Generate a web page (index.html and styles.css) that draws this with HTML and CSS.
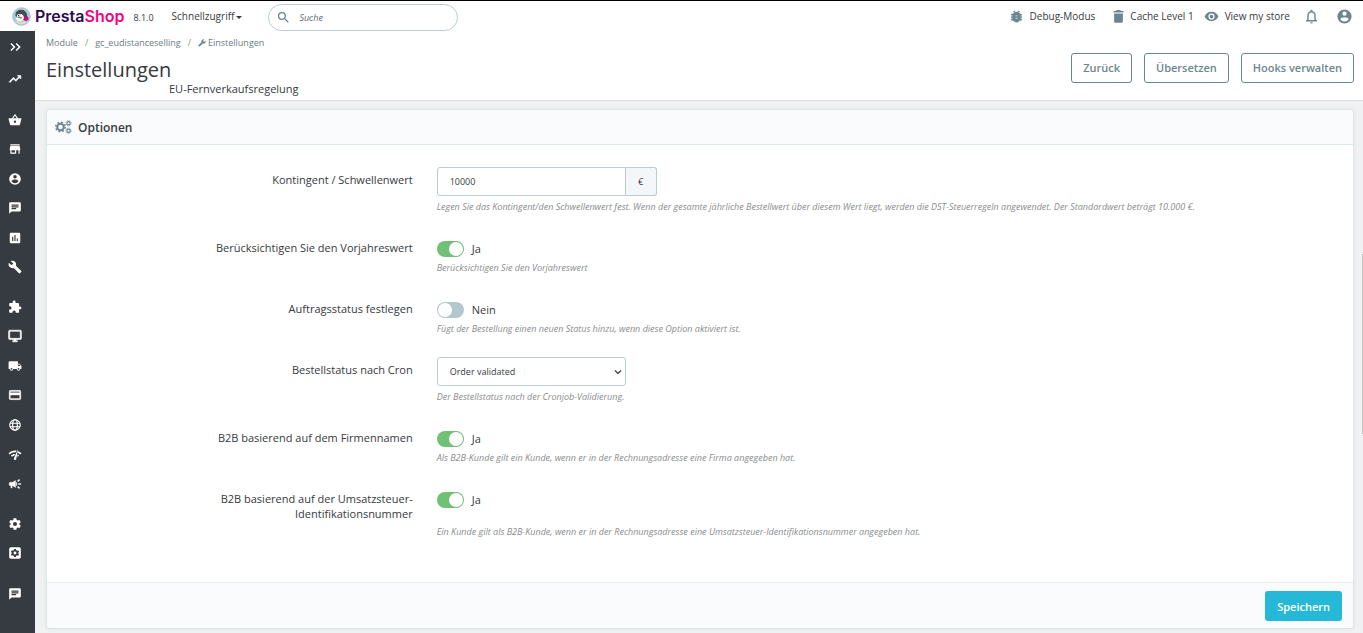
FILE: index.html
```html
<!DOCTYPE html>
<html lang="de">
<head>
<meta charset="utf-8">
<title>Einstellungen</title>
<link rel="stylesheet" href="styles.css">
</head>
<body>
<header class="topbar">
  <a class="brand" href="#">
    <svg class="brand-mark" viewBox="0 0 20 20"><circle cx="10" cy="10" r="9.300" fill="#9fd3e3" stroke="#a9b4bb" stroke-width=".8"/><path d="M3 14.500Q6 16 10 16t7-1.500a8.600 8.600 0 0 1-14 0z" fill="#ecd9bd"/><path d="M3.500 8.500Q4 3.500 9 3t7 5l-.5 3.500L12 13 4.500 11z" fill="#474a50"/><path d="M5 10Q5 6.500 8 7.500q2-.5 3.500 1l1.500 3-3 3.500H6.500L4 12.500z" fill="#f7f7f7"/><path d="M5 10.500q3.500-1.500 6 1-3 1.500-6-1z" fill="#8b8580"/><circle cx="7" cy="9" r=".8" fill="#333"/><path d="M13 11l2.500-1.500 1.500 1 .5 2.500-2.500 2-3-1.500z" fill="#df0067"/></svg>
    <span class="brand-name">Presta<span class="brand-accent">Shop</span></span>
  </a>
  <span class="version">8.1.0</span>
  <button class="quick" type="button">Schnellzugriff<span class="caret"></span></button>
  <form class="search" role="search">
    <svg class="search-icon" viewBox="0 0 24 24"><path d="M15.500 14h-.79l-.28-.27A6.470 6.470 0 0 0 16 9.500 6.500 6.500 0 1 0 9.500 16c1.610 0 3.090-.59 4.230-1.570l.27.28v.79l5 4.990L20.490 19l-4.990-5zm-6 0C7.010 14 5 11.990 5 9.500S7.010 5 9.500 5 14 7.010 14 9.500 11.990 14 9.500 14z"/></svg>
    <input class="search-input" type="text" placeholder="Suche" aria-label="Suche">
  </form>
  <nav class="tools">
    <a class="tool debug" href="#"><svg class="icon" viewBox="0 0 24 24"><path d="M20 8h-2.810a5.985 5.985 0 0 0-1.820-1.960L17 4.410 15.590 3l-2.170 2.170a6.002 6.002 0 0 0-2.830 0L8.410 3 7 4.410l1.620 1.630C7.880 6.550 7.260 7.220 6.810 8H4v2h2.090c-.05.33-.09.66-.09 1v1H4v2h2v1c0 .34.04.67.09 1H4v2h2.810c1.040 1.790 2.970 3 5.190 3s4.150-1.210 5.190-3H20v-2h-2.090c.05-.33.09-.66.09-1v-1h2v-2h-2v-1c0-.34-.04-.67-.09-1H20V8zm-6 8h-4v-2h4v2zm0-4h-4v-2h4v2z" stroke="#6c868e"/></svg>Debug-Modus</a>
    <a class="tool cache" href="#"><svg class="icon" viewBox="0 0 24 24"><path d="M5 20a2 2 0 0 0 2 2h10a2 2 0 0 0 2-2V7H5zM20 3h-4l-1-1.500H9L8 3H4v2.500h16z"/></svg>Cache Level 1</a>
    <a class="tool" href="#"><svg class="icon" viewBox="0 0 24 24"><path d="M12 4.500C7 4.500 2.730 7.610 1 12c1.730 4.390 6 7.500 11 7.500s9.270-3.110 11-7.500c-1.730-4.390-6-7.500-11-7.500zM12 17a5 5 0 1 1 0-10 5 5 0 0 1 0 10zm0-8a3 3 0 1 0 0 6 3 3 0 0 0 0-6z"/></svg>View my store</a>
    <button class="tool-button" type="button" aria-label="Benachrichtigungen"><svg class="icon large" viewBox="0 0 24 24"><path d="M12 22a2 2 0 0 0 2-2h-4a2 2 0 0 0 2 2zm6-6v-5c0-3.070-1.630-5.640-4.500-6.320V4a1.500 1.500 0 0 0-3 0v.68C7.640 5.360 6 7.920 6 11v5l-2 2v1h16v-1l-2-2zm-2 1H8v-6c0-2.480 1.510-4.500 4-4.500s4 2.020 4 4.500v6z"/></svg></button>
    <button class="tool-button" type="button" aria-label="Konto"><svg class="icon large" viewBox="0 0 24 24"><path d="M12 2a10 10 0 1 0 0 20 10 10 0 0 0 0-20zm0 3a3 3 0 1 1 0 6 3 3 0 0 1 0-6zm0 14.200a7.200 7.200 0 0 1-6-3.220c.03-1.990 4-3.080 6-3.080s5.970 1.090 6 3.080a7.200 7.200 0 0 1-6 3.220z"/></svg></button>
  </nav>
</header>
<div class="shell">
  <nav class="sidebar" aria-label="Hauptmenü">
    <button class="side-link toggle" type="button" aria-label="Menü ausklappen"><svg class="side-icon" viewBox="0 0 24 24"><path d="M5 6l6 6-6 6M14 6l6 6-6 6" fill="none" stroke="#fff" stroke-width="2.600"/></svg></button>
    <a class="side-link dash" href="#" aria-label="Dashboard"><svg class="side-icon" viewBox="0 0 24 24"><path d="M16 6l2.290 2.290-4.880 4.880-4-4L2 16.590 3.410 18l6-6 4 4 6.300-6.290L22 12V6z" stroke="#fff"/></svg></a>
    <div class="side-group six">
      <a class="side-link" href="#" aria-label="Bestellungen"><svg class="side-icon" viewBox="0 0 24 24"><path d="M17.210 9l-4.380-6.560a1 1 0 0 0-1.660 0L6.790 9H2a1 1 0 0 0-1 1.270l2.540 9.270A2 2 0 0 0 5.460 21h13.080a2 2 0 0 0 1.930-1.460L23 10.270A1 1 0 0 0 22 9h-4.790zM9 9l3-4.400L15 9H9zm3 8a2 2 0 1 1 0-4 2 2 0 0 1 0 4z"/></svg></a>
      <a class="side-link" href="#" aria-label="Katalog"><svg class="side-icon" viewBox="0 0 24 24"><path d="M20 4H4v2h16V4zm1 10v-2l-1-5H4l-1 5v2h1v6h10v-6h4v6h2v-6h1zm-9 4H6v-4h6v4z"/></svg></a>
      <a class="side-link" href="#" aria-label="Kunden"><svg class="side-icon" viewBox="0 0 24 24"><path d="M12 2a10 10 0 1 0 0 20 10 10 0 0 0 0-20zm0 3a3 3 0 1 1 0 6 3 3 0 0 1 0-6zm0 14.200a7.200 7.200 0 0 1-6-3.220c.03-1.990 4-3.080 6-3.080s5.970 1.090 6 3.080a7.200 7.200 0 0 1-6 3.220z"/></svg></a>
      <a class="side-link" href="#" aria-label="Kundenservice"><svg class="side-icon" viewBox="0 0 24 24"><path d="M20 2H4a2 2 0 0 0-2 2v18l4-4h14a2 2 0 0 0 2-2V4a2 2 0 0 0-2-2zM6 9h12v2H6V9zm8 5H6v-2h8v2zm4-6H6V6h12v2z"/></svg></a>
      <a class="side-link" href="#" aria-label="Statistiken"><svg class="side-icon" viewBox="0 0 24 24"><path d="M19 3H5a2 2 0 0 0-2 2v14a2 2 0 0 0 2 2h14a2 2 0 0 0 2-2V5a2 2 0 0 0-2-2zM9 17H7v-7h2v7zm4 0h-2V7h2v10zm4 0h-2v-4h2v4z"/></svg></a>
      <a class="side-link" href="#" aria-label="Werkzeuge"><svg class="side-icon" viewBox="0 0 24 24"><path d="M22.700 19l-9.100-9.100c.9-2.300.4-5-1.500-6.900-2-2-5-2.400-7.400-1.300L9 6 6 9 1.600 4.700C.4 7.100.9 10.100 2.900 12.100c1.900 1.900 4.600 2.400 6.900 1.500l9.100 9.100c.4.4 1 .4 1.400 0l2.300-2.300c.5-.4.5-1.100.1-1.400z"/></svg></a>
    </div>
    <div class="side-group seven">
      <a class="side-link" href="#" aria-label="Module"><svg class="side-icon" viewBox="0 0 24 24"><path d="M20.500 11H19V7a2 2 0 0 0-2-2h-4V3.500a2.500 2.500 0 0 0-5 0V5H4a2 2 0 0 0-2 2v3.800h1.500a2.700 2.700 0 0 1 0 5.400H2V20a2 2 0 0 0 2 2h3.800v-1.500a2.700 2.700 0 0 1 5.400 0V22H17a2 2 0 0 0 2-2v-4h1.500a2.500 2.500 0 0 0 0-5z"/></svg></a>
      <a class="side-link" href="#" aria-label="Design"><svg class="side-icon" viewBox="0 0 24 24"><path d="M21 2H3a2 2 0 0 0-2 2v12a2 2 0 0 0 2 2h7v2H8v2h8v-2h-2v-2h7a2 2 0 0 0 2-2V4a2 2 0 0 0-2-2zm0 14H3V4h18v12z" stroke="#fff"/></svg></a>
      <a class="side-link" href="#" aria-label="Versand"><svg class="side-icon" viewBox="0 0 24 24"><path d="M20 8h-3V4H3a2 2 0 0 0-2 2v11h2a3 3 0 0 0 6 0h6a3 3 0 0 0 6 0h2v-5l-3-4zM6 18.500a1.500 1.500 0 1 1 0-3 1.500 1.500 0 0 1 0 3zm13.500-9l1.960 2.500H17V9.500h2.500zm-1.500 9a1.500 1.500 0 1 1 0-3 1.500 1.500 0 0 1 0 3z"/></svg></a>
      <a class="side-link" href="#" aria-label="Zahlung"><svg class="side-icon" viewBox="0 0 24 24"><path d="M20 4H4a2 2 0 0 0-2 2v12a2 2 0 0 0 2 2h16a2 2 0 0 0 2-2V6a2 2 0 0 0-2-2zm0 14H4v-6h16v6zm0-10H4V6h16v2z" stroke="#fff" stroke-width=".6"/></svg></a>
      <a class="side-link" href="#" aria-label="International"><svg class="side-icon" viewBox="0 0 24 24"><g fill="none" stroke="#fff" stroke-width="2"><circle cx="12" cy="12" r="9"/><ellipse cx="12" cy="12" rx="4" ry="9"/><path d="M3.500 9h17M3.500 15h17"/></g></svg></a>
      <a class="side-link" href="#" aria-label="Marketing"><svg class="side-icon" viewBox="0 0 24 24"><path d="M1 9l2 2c2.880-2.880 6.790-4.080 10.530-3.620l1.190-2.680C9.890 3.840 4.740 5.270 1 9zm20 2l2-2a15.400 15.400 0 0 0-5.590-3.570l-.53 2.820c1.500.62 2.900 1.530 4.120 2.750zm-4 4l2-2c-.8-.8-1.700-1.420-2.660-1.890l-.55 2.920c.42.270.83.590 1.210.97zM5 13l2 2a7.100 7.100 0 0 1 4.030-2l1.280-2.880C9.680 10 6.990 11 5 13zM16.800 3l-6.600 14.500a2.100 2.100 0 1 0 4 .4L17.300 3z"/></svg></a>
      <a class="side-link" href="#" aria-label="Kampagnen"><svg class="side-icon" viewBox="0 0 24 24"><path d="M18 11v2h4v-2h-4zm-2 6.610c.96.71 2.210 1.650 3.200 2.390l1.200-1.600c-.99-.74-2.240-1.680-3.200-2.400l-1.200 1.610zM20.400 5.600L19.200 4c-.99.74-2.240 1.680-3.200 2.400L17.200 8c.96-.72 2.210-1.650 3.200-2.400zM4 9a2 2 0 0 0-2 2v2a2 2 0 0 0 2 2h1v4h2v-4h1l5 3V6L8 9H4zm11.500 3A4.500 4.500 0 0 0 14 8.650v6.690c.92-.81 1.500-2 1.500-3.340z" stroke="#fff" stroke-width=".6"/></svg></a>
    </div>
    <div class="side-group two">
      <a class="side-link" href="#" aria-label="Voreinstellungen"><svg class="side-icon" viewBox="0 0 24 24"><path d="M19.400 13a7.800 7.800 0 0 0 0-2l2.100-1.700a.5.500 0 0 0 .1-.6l-2-3.500a.5.500 0 0 0-.6-.2l-2.500 1a7.300 7.300 0 0 0-1.700-1l-.4-2.600a.5.500 0 0 0-.5-.4h-4a.5.500 0 0 0-.5.400L9 5a7.700 7.700 0 0 0-1.700 1L4.900 5a.5.500 0 0 0-.6.200l-2 3.500a.5.500 0 0 0 .1.600L4.500 11a7.900 7.900 0 0 0 0 2l-2.100 1.700a.5.500 0 0 0-.1.600l2 3.500c.1.200.4.300.6.200l2.500-1a7.300 7.300 0 0 0 1.700 1l.4 2.600c0 .2.200.4.500.4h4c.3 0 .5-.2.500-.4l.4-2.600a7.700 7.700 0 0 0 1.700-1l2.500 1c.2.100.5 0 .6-.2l2-3.500a.5.500 0 0 0-.1-.6zM12 15.500a3.500 3.500 0 1 1 0-7 3.500 3.500 0 0 1 0 7z"/></svg></a>
      <a class="side-link" href="#" aria-label="Erweiterte Einstellungen"><svg class="side-icon" viewBox="0 0 24 24"><path fill-rule="evenodd" d="M5 2h14a3 3 0 0 1 3 3v14a3 3 0 0 1-3 3H5a3 3 0 0 1-3-3V5a3 3 0 0 1 3-3zm5.500 3l-.5 2-1.500 1-2-.6L5 10l1.500 1.500v1L5 14l1.500 2.600 2-.6 1.500 1 .5 2h3l.5-2 1.500-1 2 .6L19 14l-1.500-1.500v-1L19 10l-1.500-2.600-2 .6L14 7l-.5-2zM12 9.500a2.500 2.500 0 1 1 0 5 2.500 2.500 0 0 1 0-5z"/></svg></a>
    </div>
    <div class="side-group">
      <a class="side-link" href="#" aria-label="Nachrichten"><svg class="side-icon" viewBox="0 0 24 24"><path d="M20 2H4a2 2 0 0 0-2 2v18l4-4h14a2 2 0 0 0 2-2V4a2 2 0 0 0-2-2zM6 9h12v2H6V9zm8 5H6v-2h8v2zm4-6H6V6h12v2z"/></svg></a>
    </div>
  </nav>
  <div class="page">
    <div class="page-head">
      <div class="headings">
        <nav class="crumbs" aria-label="Breadcrumb"><a href="#">Module</a><span class="slash">/</span><a href="#">gc_eudistanceselling</a><span class="slash">/</span><a href="#"><svg class="wrench" viewBox="0 0 24 24"><path d="M1.300 19l9.100-9.100c-.9-2.300-.4-5 1.500-6.900 2-2 5-2.400 7.400-1.300L15 6l3 3 4.400-4.300c1.200 2.400.7 5.400-1.300 7.400-1.900 1.900-4.600 2.400-6.900 1.500l-9.100 9.100c-.4.400-1 .4-1.400 0l-2.300-2.300c-.5-.4-.5-1.100-.1-1.400z"/></svg>Einstellungen</a></nav>
        <h1 class="title">Einstellungen</h1>
        <h2 class="subtitle">EU-Fernverkaufsregelung</h2>
      </div>
      <div class="actions">
        <button class="outline" type="button">Zurück</button>
        <button class="outline" type="button">Übersetzen</button>
        <button class="outline" type="button">Hooks verwalten</button>
      </div>
    </div>
    <main class="content">
      <form class="panel">
        <h3 class="panel-head"><svg class="cogs" viewBox="0 0 34 28"><g fill="none" stroke="#6c868e"><circle cx="11" cy="14" r="6.500" stroke-width="4"/><circle cx="11" cy="14" r="9.500" stroke-width="3" stroke-dasharray="3.730 3.730"/><circle cx="27" cy="6.500" r="3.300" stroke-width="2.200"/><circle cx="27" cy="6.500" r="5.200" stroke-width="1.800" stroke-dasharray="2.040 2.040"/><circle cx="27" cy="21.500" r="3.300" stroke-width="2.200"/><circle cx="27" cy="21.500" r="5.200" stroke-width="1.800" stroke-dasharray="2.040 2.040"/></g></svg>Optionen</h3>
        <div class="panel-body">
          <div class="row">
            <label class="label" for="quota">Kontingent / Schwellenwert</label>
            <div class="group"><input class="text" id="quota" type="text" value="10000"><span class="addon">€</span></div>
            <p class="help">Legen Sie das Kontingent/den Schwellenwert fest. Wenn der gesamte jährliche Bestellwert über diesem Wert liegt, werden die DST-Steuerregeln angewendet. Der Standardwert beträgt 10.000 €.</p>
          </div>
          <div class="row">
            <label class="label" for="lastyear">Berücksichtigen Sie den Vorjahreswert</label>
            <div class="toggle-line"><input class="switch" id="lastyear" type="checkbox" role="switch" checked><span>Ja</span></div>
            <p class="help">Berücksichtigen Sie den Vorjahreswert</p>
          </div>
          <div class="row">
            <label class="label" for="setstate">Auftragsstatus festlegen</label>
            <div class="toggle-line"><input class="switch" id="setstate" type="checkbox" role="switch"><span>Nein</span></div>
            <p class="help">Fügt der Bestellung einen neuen Status hinzu, wenn diese Option aktiviert ist.</p>
          </div>
          <div class="row">
            <label class="label" for="cron">Bestellstatus nach Cron</label>
            <div class="select-wrap"><select class="select" id="cron"><option>Order validated</option></select><svg class="chevron" viewBox="0 0 8 8"><path d="M1 2.500l3 3 3-3" fill="none" stroke="#333" stroke-width="1.200"/></svg></div>
            <p class="help">Der Bestellstatus nach der Cronjob-Validierung.</p>
          </div>
          <div class="row">
            <label class="label" for="company">B2B basierend auf dem Firmennamen</label>
            <div class="toggle-line"><input class="switch" id="company" type="checkbox" role="switch" checked><span>Ja</span></div>
            <p class="help">Als B2B-Kunde gilt ein Kunde, wenn er in der Rechnungsadresse eine Firma angegeben hat.</p>
          </div>
          <div class="row">
            <label class="label" for="vat">B2B basierend auf der Umsatzsteuer-Identifikationsnummer</label>
            <div class="toggle-line"><input class="switch" id="vat" type="checkbox" role="switch" checked><span>Ja</span></div>
            <p class="help">Ein Kunde gilt als B2B-Kunde, wenn er in der Rechnungsadresse eine Umsatzsteuer-Identifikationsnummer angegeben hat.</p>
          </div>
        </div>
        <div class="panel-foot"><button class="save" type="submit">Speichern</button></div>
      </form>
    </main>
  </div>
</div>
<span class="scroll-thumb"></span>
</body>
</html>
```
FILE: styles.css
```css
* { box-sizing: border-box; }
html { height: 100%; }
body {
  display: flex;
  flex-direction: column;
  min-height: 100%;
  margin: 0;
  border-top: 1px solid #000;
  background: #eff1f3;
  color: #363a41;
  font: 11px/15px "Open Sans", sans-serif;
}
h1, h2, h3, p { margin: 0; font-weight: 400; }
a { color: inherit; text-decoration: none; }
button, input, select { font: inherit; color: inherit; margin: 0; }
button { cursor: pointer; }

.topbar {
  display: flex;
  align-items: center;
  height: 30px;
  padding: 0 10px 0 12px;
  background: #fff;
  font-size: 10px;
}
.brand { display: flex; align-items: center; gap: 4px; }
.brand-mark { width: 19px; height: 19px; }
.brand-name { color: #2b0b4f; font: 600 16px/20px Inter, sans-serif; }
.brand-accent { color: #f0047f; }
.version { margin: 3px 0 0 9px; font-size: 9px; }
.quick {
  display: flex;
  align-items: center;
  gap: 2px;
  margin-left: 18px;
  padding: 0;
  border: 0;
  background: none;
}
.caret { margin-top: 2px; border: 3px solid transparent; border-top: 3px solid #363a41; border-bottom: 0; }
.search {
  display: flex;
  align-items: center;
  gap: 8px;
  width: 190px;
  height: 27px;
  margin: 3px 0 0 26px;
  padding: 0 7px;
  border: 1px solid #bbcdd2;
  border-radius: 14px;
}
.search-icon { flex: none; width: 15px; height: 15px; fill: #6c868e; }
.search-input { width: 100%; padding: 0; border: 0; outline: 0; background: none; font-size: 9px; font-style: italic; }
.search-input::placeholder { color: #5b6770; opacity: 1; }
.tools { display: flex; align-items: center; margin-left: auto; }
.tool { display: flex; align-items: center; gap: 6px; margin-right: 10px; white-space: nowrap; }
.tool.debug { margin-right: 16px; }
.tool.cache { gap: 4px; }
.icon { width: 15px; height: 15px; fill: #6c868e; }
.icon.large { display: block; width: 17px; height: 17px; }
.tool-button { margin-left: 16px; padding: 0; border: 0; background: none; }
.tool + .tool-button { margin-left: 3px; }

.shell { display: flex; flex: 1; }
.sidebar { flex: none; width: 35px; background: #363a41; }
.side-link { display: flex; align-items: center; justify-content: center; width: 30px; min-height: 29px; padding: 0; border: 0; background: none; }
.side-icon { width: 14px; height: 14px; fill: #fff; }
.side-link.toggle { height: 32px; }
.side-link.dash { height: 32px; }
.side-group { display: grid; margin-top: 10px; }
.side-group:last-child { margin-top: 11px; }
.six { height: 177px; }
.seven { height: 207px; }
.two { height: 59px; }

.page { flex: 1; min-width: 0; }
.page-head {
  display: flex;
  justify-content: space-between;
  align-items: flex-start;
  padding: 5px 9px 4px 11px;
  border-bottom: 1px solid #d9dde0;
  background: #fff;
}
.crumbs { display: flex; color: #6c7a80; font-size: 9px; line-height: 14px; }
.crumbs a { display: flex; align-items: center; }
.slash { margin: 0 7px; color: #8b9a5a; }
.wrench { width: 8px; height: 8px; margin-right: 2px; fill: #6c868e; }
.title { margin-top: 5px; font-size: 20px; line-height: 29px; }
.subtitle { margin: -3px 0 0 123px; font-size: 11px; line-height: 15px; }
.actions { display: flex; gap: 12px; margin-top: 17px; }
.outline {
  height: 30px;
  padding: 0 11px 2px;
  border: 1px solid #6c868e;
  border-radius: 3px;
  background: #fff;
  color: #6c868e;
  font-weight: 600;
}
.content { padding: 8px 9px 4px 11px; }
.panel {
  border: 1px solid #dbe6e9;
  border-radius: 4px;
  background: #fff;
  box-shadow: 0 0 4px rgba(0, 0, 0, 0.06);
}
.panel-head {
  display: flex;
  align-items: center;
  gap: 6px;
  height: 35px;
  padding: 0 8px;
  border-bottom: 1px solid #dbe6e9;
  border-radius: 4px 4px 0 0;
  background: #fafbfc;
  font-size: 12px;
  font-weight: 600;
}
.cogs { width: 17px; height: 14px; }
.panel-body { padding: 22px 0; }
.row { display: grid; grid-template-columns: 28% 1fr; column-gap: 24px; margin-bottom: 21px; }
.label { padding: 5px 0 0 140px; text-align: right; }
.help { grid-column: 2; margin-top: 3px; color: #8a8c8e; font-size: 9px; font-style: italic; }
.group { display: flex; }
.text, .select {
  width: 189px;
  height: 29px;
  padding: 0 12px;
  border: 1px solid #bbcdd2;
  border-radius: 3px;
  background: #fff;
  font-size: 9px;
}
.text { border-radius: 3px 0 0 3px; }
.addon {
  display: flex;
  align-items: center;
  justify-content: center;
  width: 31px;
  border: 1px solid #bbcdd2;
  border-left: 0;
  border-radius: 0 3px 3px 0;
  background: #f3f7f9;
  font-size: 9px;
}
.toggle-line { display: flex; align-items: flex-start; align-self: start; gap: 8px; height: 16px; margin-top: 6px; }
.switch {
  display: flex;
  align-items: center;
  width: 27px;
  height: 16px;
  padding: 0 1px;
  border-radius: 8px;
  background: #b3c7cd;
  appearance: none;
}
.switch::before { content: ""; width: 14px; height: 14px; border-radius: 50%; background: #fff; }
.switch:checked { justify-content: flex-end; background: #70c075; }
.select-wrap { position: relative; width: 189px; }
.select { display: block; appearance: none; }
.chevron { position: absolute; right: 4px; top: 11px; width: 8px; height: 8px; pointer-events: none; }
.panel-foot {
  display: flex;
  justify-content: flex-end;
  padding: 8px 11px 7px;
  border-top: 1px solid #e6edef;
  border-radius: 0 0 4px 4px;
  background: #fafbfc;
}
.save {
  height: 30px;
  padding: 0 12px;
  border: 0;
  border-radius: 3px;
  background: #25b9d7;
  color: #fff;
  font-weight: 600;
}
.scroll-thumb { position: absolute; right: 0; top: 254px; width: 1px; height: 180px; background: #c1c1c1; }
```
